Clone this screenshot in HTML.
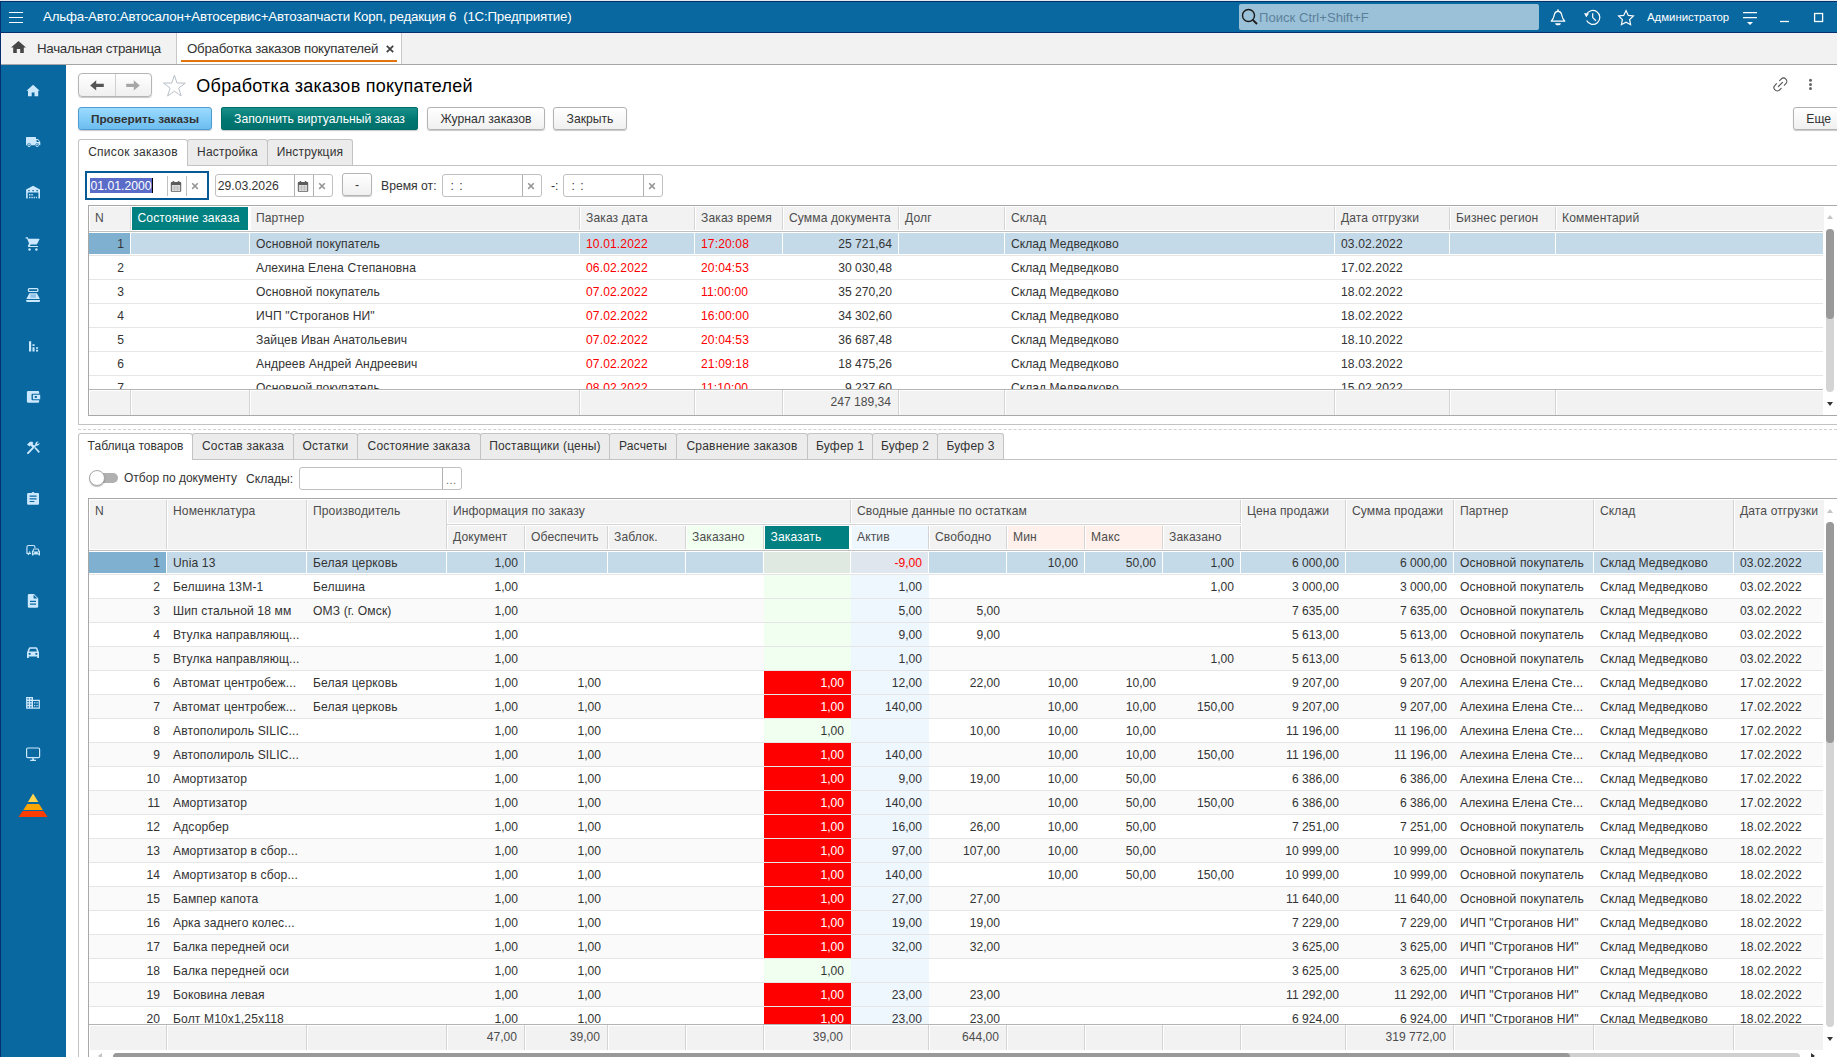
<!DOCTYPE html>
<html lang="ru"><head><meta charset="utf-8"><title>Обработка заказов покупателей</title>
<style>
*{box-sizing:border-box;margin:0;padding:0}
html,body{width:1837px;height:1057px;overflow:hidden;background:#fff}
body{font-family:"Liberation Sans",sans-serif;font-size:12.2px;color:#333;position:relative}
.abs{position:absolute}
#topbar{position:absolute;left:0;top:0;width:1837px;height:33px;background:linear-gradient(#e4e9ee 0,#e4e9ee 1px,#04306e 1px,#04306e 2px,#08689f 2px,#08689f 32px,#04306e 32px)}
#topbar .ttl{position:absolute;left:43px;top:9.4px;font-size:13.3px;letter-spacing:-.2px;color:#fff;white-space:pre;line-height:15px}
#search{position:absolute;left:1239px;top:4px;width:300px;height:26px;background:#9bc1d9;border-radius:2px}
#search .ph{position:absolute;left:20px;top:5.7px;font-size:13.1px;line-height:16px;color:#5b8099}
#admin{position:absolute;left:1647px;top:10px;font-size:11.4px;line-height:14px;color:#fff}
#tabbar{position:absolute;left:0;top:33px;width:1837px;height:32px;background:#f2f2f2;border-bottom:1px solid #a6a6a6}
#tabbar .t1{position:absolute;left:37px;top:7.5px;font-size:13.3px;letter-spacing:-.26px;line-height:15px;color:#333}
#tabbar .sep{position:absolute;left:176px;top:0;width:1px;height:31px;background:#c8c8c8}
#tabbar .act{position:absolute;left:177px;top:0;width:225px;height:31px;background:#fff;border-right:1px solid #c8c8c8}
#tabbar .act .tx{position:absolute;left:10px;top:7.5px;font-size:13.3px;letter-spacing:-.26px;line-height:15px;color:#333;white-space:nowrap}
#tabbar .act .ul{position:absolute;left:4px;top:27px;width:216px;height:2px;background:#e2740c}
#tabbar .act .x{position:absolute;left:208.5px;top:11.7px}
#side{position:absolute;left:0;top:65px;width:66px;height:992px;background:#08689f}

#main{position:absolute;left:67px;top:65px;width:1770px;height:992px;background:#fff}
.btn{position:absolute;height:23px;border:1px solid #b4b4b4;border-radius:3px;background:linear-gradient(#fff,#f0f0f0);box-shadow:0 1px 1px rgba(0,0,0,.22);font-size:12.2px;line-height:23px;text-align:center;color:#333;white-space:nowrap}
.btn.blue{background:linear-gradient(#9bdbff,#6cbdf0);border-color:#4d9bd1;font-weight:bold;color:#333;font-size:11.8px}
.btn.teal{background:linear-gradient(#189089,#007570 60%,#00716c);border-color:#006d68;color:#fff;border-radius:2px}
#title{position:absolute;left:196.3px;top:75px;font-size:18px;letter-spacing:.26px;line-height:22px;color:#000;white-space:nowrap}
.tabs{position:absolute;height:27px}
.tab{position:absolute;top:0;height:26px;border:1px solid #c3c3c3;border-bottom:none;background:#ececec;font-size:12.2px;line-height:24px;text-align:center;color:#333;border-radius:3px 3px 0 0;white-space:nowrap;letter-spacing:.2px;font-size:12px}
.tab.on{background:#fff;height:27px;z-index:2;letter-spacing:.05px}
.hline{position:absolute;height:1px;background:#c3c3c3}
.fld{position:absolute;height:23px;border:1px solid #c0c0c0;border-radius:3px;background:#fff;font-size:13px;line-height:22px;color:#333}
/* tables */
.tbl{position:absolute;border:1px solid #a8a8a8;background:#fff;overflow:hidden;font-size:12.1px}
.tbl .hrow{position:absolute;left:0;width:1734px;background:#fff}
.tbl .hc{position:absolute;top:0;background:#f2f2f2;border-right:1px solid #d4d4d4;color:#4d4d4d;white-space:nowrap;overflow:hidden;letter-spacing:.1px}
.tbl .hc{box-shadow:inset 1px 0 0 #fff}
.tbl .hc.teal{box-shadow:none}
.tbl .fc{box-shadow:inset 1px 1px 0 #fff}
.tbl .hc span{position:absolute;left:6px;top:4px;line-height:14px}
.tbl .hc.teal{background:#008080;color:#fff;border:0 solid #fff;border-left-width:1px;border-right:2px solid #fff;}
.tbl .hc.teal span{left:5.5px}
.tbl .body{position:absolute;left:0;width:1734px;overflow:hidden;border-top:1px solid #c0c0c0}
.tbl .row{position:absolute;left:0;width:1734px;height:24px;border-bottom:1px solid #e6e6e6;background:#fff}
.tbl .row.alt{background:#fafafa}
.tbl .c{position:absolute;top:0;height:23px;line-height:25px;padding:0 6px;white-space:nowrap;overflow:hidden;color:#333;letter-spacing:.12px}
.tbl .c.r{text-align:right;padding-right:7px;letter-spacing:0}
.tbl .c.n{padding-right:7px}
.tbl .c.red{color:#f00}
.tbl .row.sel{background:#fff}
.tbl .row.sel .c{top:1px;height:21px;line-height:23px;background:#c4dae9;border-right:1px solid #fff}
.tbl .row.sel .c.n{background:#7fb0d0}
.tbl .row.sel .c.r{padding-right:6px}
.tbl .c.green{background:#f0fff0}
.tbl .c.blue{background:#eef6fe}
.tbl .row.sel .c.green{background:#dfe9e2}
.tbl .row.sel .c.blue{background:#dfe6ee}
.tbl .c.redbg{background:#f00;color:#fff;height:23px}
.tbl .frow{position:absolute;left:0;width:1734px;background:#f2f2f2;border-top:1px solid #b4b4b4}
.tbl .fc{position:absolute;top:0;height:100%;border-right:1px solid #d4d4d4;padding:0 7px;line-height:24px;color:#4d4d4d;white-space:nowrap}
.tbl .fc.r{text-align:right}
.tbl .hc.hgreen{background:#f0fff0}
.tbl .hc.hblue{background:#eef6fe}
.tbl .hc.hpink{background:#fff0eb}
.tbl .hc.sub span{top:3.5px}
.tbl .hc.grp{border-bottom:none}
.vsb{position:absolute;width:8px;border-radius:4px;background:#d4d4d4}
.vsb .th{position:absolute;left:0;top:0;width:8px;border-radius:4px;background:#999}
.arr{position:absolute;width:0;height:0;border-left:3.5px solid transparent;border-right:3.5px solid transparent}
.arr.up{border-bottom:4px solid #c4c4c4}
.arr.dn{border-top:4px solid #333}

.tbl .hc.last,.tbl .fc.last{border-right:none}
.tbl .c.sk{letter-spacing:.04px}

</style></head><body>
<div id="topbar">
  <div class="ttl">Альфа-Авто:Автосалон+Автосервис+Автозапчасти Корп, редакция 6  (1С:Предприятие)</div>
  <div id="search">
    <svg class="abs" style="left:2px;top:4px" width="18" height="18" viewBox="0 0 18 18"><circle cx="7.5" cy="7.5" r="6" stroke="#1a1a1a" stroke-width="1.4" fill="none"/><path d="M11.8 11.8L16 16" stroke="#1a1a1a" stroke-width="1.8"/></svg>
    <div class="ph">Поиск Ctrl+Shift+F</div>
  </div>
  <div id="admin">Администратор</div>
  
</div>
<svg class="abs" style="left:0;top:0" width="1837" height="33" viewBox="0 0 1837 33" fill="none" stroke="#fff" stroke-width="1.2">
<path d="M1551.2 21.2 H1564.8 C1562.2 19 1562 16.5 1561.6 14.3 C1561.2 12.3 1559.8 11.3 1558 11.3 C1556.2 11.3 1554.8 12.3 1554.4 14.3 C1554 16.5 1553.8 19 1551.2 21.2 Z" stroke-linejoin="round"/>
<path d="M1558 11.2 V10" stroke-width="1.6" stroke-linecap="round"/>
<path d="M1555.2 23.3 H1560.8 A2.8 2 0 0 1 1555.2 23.3 Z" fill="#fff" stroke="none"/>
<!-- history -->
<path d="M1586.6 20.6 A7 7 0 1 0 1586.3 14.9"/>
<path d="M1584 13.3 L1589 13.6 L1586.3 17.2 Z" fill="#fff" stroke="none"/>
<path d="M1592.7 13.2 V17.6 L1596 20.8"/>
<!-- star -->
<path d="M1626 10.6 L1628.3 15.4 L1633.4 16 L1629.6 19.6 L1630.6 24.7 L1626 22.2 L1621.4 24.7 L1622.4 19.6 L1618.6 16 L1623.7 15.4 Z" stroke-linejoin="miter"/>
<!-- filter -->
<path d="M1743 12.6 H1757 M1743 17.6 H1757"/>
<path d="M1747 22 H1753 L1750 25 Z" fill="#fff" stroke="none"/>
<!-- min / max -->
<path d="M1780 21.5 H1789" stroke-width="1.3"/>
<rect x="1814.6" y="13.5" width="8" height="8" stroke-width="1.3"/>
<!-- hamburger -->
<path d="M9 12.5 H23 M9 17.5 H23 M9 22.5 H23" stroke-width="1.15"/>
</svg>
<div id="tabbar">
  <svg class="abs" style="left:11px;top:8px" width="15" height="12.4" viewBox="0 0 15 13" preserveAspectRatio="none"><path d="M7.5 0L0 6.8h2.2V13h3.6V8.4h3.4V13h3.6V6.8H15z" fill="#464646"/></svg>
  <div class="t1">Начальная страница</div>
  <div class="sep"></div>
  <div class="act"><div class="tx">Обработка заказов покупателей</div><div class="ul"></div>
    <svg class="x" width="8" height="8" viewBox="0 0 8 8"><path d="M.8 .8l6.4 6.4M7.2 .8l-6.4 6.4" stroke="#444" stroke-width="1.8"/></svg></div>
</div>
<div id="side"></div>
<svg class="abs" style="left:0;top:65px" width="67" height="992" viewBox="0 65 67 992" fill="#cce8ff">
<!-- home -->
<path d="M33.1 84.8 L39.7 90.7 H38.2 V96.2 H34.5 V92.6 H31.7 V96.2 H28 V90.7 H26.5 Z"/>
<!-- truck -->
<path d="M26 137.6 a.7 .7 0 0 1 .7 -.7 H35.3 a.7 .7 0 0 1 .7 .7 V139 H38 L40.3 142 V145.3 H26 Z M36.6 140 V142 H39.2 L37.7 140 Z"/>
<circle cx="29.1" cy="145.4" r="2.1" fill="#08689f"/><circle cx="37.2" cy="145.4" r="2.1" fill="#08689f"/>
<circle cx="29.1" cy="145.4" r="1.25" fill="none" stroke="#cce8ff" stroke-width="1"/><circle cx="37.2" cy="145.4" r="1.25" fill="none" stroke="#cce8ff" stroke-width="1"/>
<!-- warehouse -->
<path d="M33.1 185.8 L40 189.6 V198.4 H38.4 V192.6 H27.7 V198.4 H26.1 V189.6 Z M28.3 190 v1.3 h1.4 v-1.3z M32.4 190 v1.3 h1.4 v-1.3z M36.4 190 v1.3 h1.4 v-1.3z"/>
<path d="M29 194 h1.5 v1.5 h-1.5z M31.3 194 h1.5 v1.5 h-1.5z M29 196.7 h1.5 v1.5 h-1.5z M31.3 196.7 h1.5 v1.5 h-1.5z M33.6 196.7 h1.5 v1.5 h-1.5z M35.9 196.7 h1.2 v1.5 h-1.2z" opacity=".9"/>
<!-- cart -->
<path d="M25.6 237.3 H27.8 L28.4 238.7 H39 a.5 .5 0 0 1 .45 .75 L37.1 244 a1.2 1.2 0 0 1 -1.05 .6 H30.6 L29.9 245.9 H38 V247.1 H29 a1.1 1.1 0 0 1 -1 -1.65 L29.1 243.6 L27 238.5 H25.6 Z"/>
<circle cx="29.5" cy="249.4" r="1.25"/><circle cx="36.4" cy="249.4" r="1.25"/>
<!-- cash register -->
<path d="M29.3 288 H37 a1.5 1.5 0 0 1 1.5 1.5 V290.6 a1.5 1.5 0 0 1 -1.5 1.5 H29.3 a1.5 1.5 0 0 1 -1.5 -1.5 V289.5 a1.5 1.5 0 0 1 1.5 -1.5 Z M29.6 289.2 a.6 .6 0 0 0 -.6 .6 v.5 a.6 .6 0 0 0 .6 .6 H36.7 a.6 .6 0 0 0 .6 -.6 v-.5 a.6 .6 0 0 0 -.6 -.6 Z" fill-rule="evenodd"/>
<path d="M29.4 293.3 H36.9 L39.9 299 H26.3 Z"/>
<path d="M30.3 294.3 H36 V297.8 H30.3 Z" fill="#8fc1e6"/>
<path d="M26.2 299.9 H40 V301.2 L39.2 302.1 H27 L26.2 301.2 Z"/>
<!-- bars -->
<path d="M29 341.2 h2.2 v10.2 h-2.2z M32.5 344.2 h2.1 v1.9 h-2.1z M32.5 347.2 h2.1 v4.2 h-2.1z M36 347.2 h2.1 v1.5 h-2.1z M36 349.7 h2.1 v1.7 h-2.1z"/>
<!-- wallet -->
<path d="M28.1 391 H38 a1.2 1.2 0 0 1 1.2 1.2 V393.7 H32.5 a1 1 0 0 0 -1 1 V399.2 a1 1 0 0 0 1 1 H39.2 V401.6 a1.2 1.2 0 0 1 -1.2 1.2 H28.1 a1.2 1.2 0 0 1 -1.2 -1.2 V392.2 a1.2 1.2 0 0 1 1.2 -1.2 Z"/>
<path d="M32.9 394.8 H40.2 V399.2 H32.9 Z M34.8 396 v2 h2 v-2 z" fill-rule="evenodd"/>
<!-- tools -->
<path d="M27.6 454 L26.8 453.1 L32.3 447.3 L30.5 445.5 L29.5 446.5 L27 444.6 L30 441.8 H32.3 L33.4 443 L32.5 443.9 L34.2 445.6 L35.3 444.6 a2.6 2.6 0 0 1 3.2 -3 L37 443.2 L37.9 444.2 L39.5 442.7 a2.6 2.6 0 0 1 -3.2 3 L28.5 454 Z"/>
<path d="M34.5 448.2 L35.6 447.1 L39.9 451.8 L38.7 453 Z"/>
<!-- clipboard -->
<path d="M28.1 493 H31.6 a1.5 1.5 0 0 1 2.9 0 H38 a1 1 0 0 1 1 1 V503.8 a1 1 0 0 1 -1 1 H28.1 a1 1 0 0 1 -1 -1 V494 a1 1 0 0 1 1 -1 Z M29.6 495.5 v1.2 h7 v-1.2z M29.6 498.2 v1.2 h7 v-1.2z M29.6 500.9 v1.2 h4.8 v-1.2z" fill-rule="evenodd"/>
<!-- commute -->
<path d="M28.3 545 H33.5 a2 2 0 0 1 2 2 V548 H34.4 V547 a.9 .9 0 0 0 -.9 -.9 H28.4 a.9 .9 0 0 0 -.9 .9 V552.8 H31 V553.9 H29.2 V555 H27.8 V553.9 H26.4 V547 a2 2 0 0 1 2 -2 Z" />
<circle cx="29.6" cy="552" r=".8"/>
<path d="M33.6 548.6 H38.3 L40 551.6 V555.4 H38.6 V554.4 H33.3 V555.4 H31.9 V551.6 Z M34.2 549.6 L33.3 551.4 H38.6 L37.7 549.6 Z M33 552.3 v1 h1.2 v-1z M37.7 552.3 v1 h1.2 v-1z" fill-rule="evenodd"/>
<!-- document -->
<path d="M29 594 H34 L38.2 598.2 V606.6 a1.2 1.2 0 0 1 -1.2 1.2 H29 a1.2 1.2 0 0 1 -1.2 -1.2 V595.2 a1.2 1.2 0 0 1 1.2 -1.2 Z M33.6 594.8 V598.6 H37.4 Z M30 600.8 v1.3 h6 v-1.3z M30 603.4 v1.3 h6 v-1.3z" fill-rule="evenodd"/>
<!-- car -->
<path d="M29.9 647.2 H36.2 a1.2 1.2 0 0 1 1.1 .8 L39 652.4 V658 H37.2 V656.6 H28.8 V658 H27 V652.4 L28.8 648 a1.2 1.2 0 0 1 1.1 -.8 Z M30.1 648.8 L29 651.6 H37 L36 648.8 Z M28.7 653 v1.7 h1.9 v-1.7z M35.4 653 v1.7 h1.9 v-1.7z" fill-rule="evenodd"/>
<!-- building -->
<path d="M26.1 697 H33 V699.7 H39.9 V708.8 H26.1 Z M27.4 698.2 v1.3 h1.4 v-1.3z M30.2 698.2 v1.3 h1.4 v-1.3z M27.4 700.9 v1.3 h1.4 v-1.3z M30.2 700.9 v1.3 h1.4 v-1.3z M27.4 703.5 v1.3 h1.4 v-1.3z M30.2 703.5 v1.3 h1.4 v-1.3z M27.4 706.2 v1.3 h1.4 v-1.3z M30.2 706.2 v1.3 h1.4 v-1.3z M33 701 v6.6 h5.7 v-6.6z" fill-rule="evenodd"/>
<path d="M34 702.3 h1.3 v1.3 h-1.3z M36.4 702.3 h1.3 v1.3 h-1.3z M34 705 h1.3 v1.3 h-1.3z M36.4 705 h1.3 v1.3 h-1.3z" opacity=".95"/>
<!-- monitor -->
<rect x="26.6" y="748" width="13" height="9.7" rx="1.2" fill="none" stroke="#cce8ff" stroke-width="1.2"/>
<path d="M32.2 758.2 H34 V759.8 H36 V760.9 H30.2 V759.8 H32.2 Z"/>
<!-- pyramid -->
<path d="M33.1 793.4 L38.3 802 H27.9 Z" fill="#ffd54f"/>
<path d="M27.2 803.9 H39 L42.9 810 H23.3 Z" fill="#ffa500"/>
<path d="M22.7 811 H43.5 L47.6 817.1 H18.6 Z" fill="#ff3d00"/>
</svg>
<div class="abs" style="left:0;top:1px;width:1px;height:1056px;background:#04306e"></div>
<div id="main"></div>
<!-- form header -->
<div class="btn" style="left:78px;top:73px;width:74px;height:24px;border-radius:4px"></div>
<div class="abs" style="left:115px;top:74px;width:1px;height:22px;background:#d0d0d0"></div>
<div id="title">Обработка заказов покупателей</div>

<div class="btn blue" style="left:78px;top:107px;width:134px">Проверить заказы</div>
<div class="btn teal" style="left:221px;top:107px;width:197px">Заполнить виртуальный заказ</div>
<div class="btn" style="left:427px;top:107px;width:118px">Журнал заказов</div>
<div class="btn" style="left:553px;top:107px;width:74px">Закрыть</div>
<div class="btn" style="left:1793px;top:107px;width:60px;text-align:left;padding-left:12.3px;line-height:22px">Еще<span style="font-size:8px;padding-left:6px">▾</span></div>
<!-- upper tabs -->
<div class="tabs" style="left:78px;top:139px;width:1759px">
  <div class="tab on" style="left:0;width:110px;letter-spacing:.27px">Список заказов</div>
  <div class="tab" style="left:109px;width:81px">Настройка</div>
  <div class="tab" style="left:189px;width:86px">Инструкция</div>
</div>
<div class="hline" style="left:78px;top:165px;width:1759px"></div>
<div class="abs" style="left:78px;top:165px;width:1px;height:260px;background:#c3c3c3"></div>
<div class="hline" style="left:78px;top:424px;width:1759px"></div>
<div class="abs" style="left:78px;top:429px;width:1759px;height:0;border-top:1px dashed #d0d0d0"></div>
<!-- date filters -->
<div class="abs" style="left:85px;top:171px;width:124px;height:29px;border:2px solid #055a96;background:#fff"></div>
<div class="abs" style="left:90px;top:178px;width:62px;height:15px;background:#5a6cc8;color:#fff;font-size:12.2px;line-height:17px;padding-left:0.5px;white-space:nowrap">01.01.2000</div><div class="abs" style="left:152px;top:178px;width:1px;height:15px;background:#000"></div>
<div class="abs" style="left:167px;top:176px;width:1px;height:20px;background:#c0c0c0"></div>
<div class="abs" style="left:186px;top:176px;width:1px;height:20px;background:#c0c0c0"></div>
<div class="fld" style="left:215px;top:174px;width:118px;height:23px;padding-left:1.7px;font-size:12.2px;line-height:22px">29.03.2026</div>
<div class="abs" style="left:294px;top:175px;width:1px;height:21px;background:#b0b0b0"></div>
<div class="abs" style="left:313px;top:175px;width:1px;height:21px;background:#b0b0b0"></div>

<div class="btn" style="left:342px;top:173px;width:30px">-</div>
<div class="abs" style="left:381px;top:179px;line-height:14px">Время от:</div>
<div class="fld" style="left:442px;top:174px;width:100px;padding-left:7.5px;word-spacing:2px;font-size:12.2px">: :</div>
<div class="abs" style="left:522px;top:175px;width:1px;height:21px;background:#b0b0b0"></div>
<div class="abs" style="left:551px;top:179px;line-height:14px">-:</div>
<div class="fld" style="left:563px;top:174px;width:100px;padding-left:7.5px;word-spacing:2px;font-size:12.2px">: :</div>
<div class="abs" style="left:643px;top:175px;width:1px;height:21px;background:#b0b0b0"></div>
<div class="tbl" id="t1" style="left:88px;top:205px;width:1755px;height:211px">
<div class="hrow" style="top:1px;height:23px">
<div class="hc" style="left:0px;width:42px;height:23px"><span>N</span></div>
<div class="hc teal" style="left:42px;width:119px;height:23px"><span>Состояние заказа</span></div>
<div class="hc" style="left:161px;width:330px;height:23px"><span>Партнер</span></div>
<div class="hc" style="left:491px;width:115px;height:23px"><span>Заказ дата</span></div>
<div class="hc" style="left:606px;width:88px;height:23px"><span>Заказ время</span></div>
<div class="hc" style="left:694px;width:116px;height:23px"><span>Сумма документа</span></div>
<div class="hc" style="left:810px;width:106px;height:23px"><span>Долг</span></div>
<div class="hc" style="left:916px;width:330px;height:23px"><span>Склад</span></div>
<div class="hc" style="left:1246px;width:115px;height:23px"><span>Дата отгрузки</span></div>
<div class="hc" style="left:1361px;width:106px;height:23px"><span>Бизнес регион</span></div>
<div class="hc last" style="left:1467px;width:268px;height:23px"><span>Комментарий</span></div>
</div>
<div class="body" style="top:25px;height:158px">
<div class="row sel" style="top:0px">
<div class="c r n" style="left:0px;width:42px">1</div>
<div class="c" style="left:42px;width:119px"></div>
<div class="c" style="left:161px;width:330px">Основной покупатель</div>
<div class="c red" style="left:491px;width:115px">10.01.2022</div>
<div class="c red" style="left:606px;width:88px">17:20:08</div>
<div class="c r" style="left:694px;width:116px">25 721,64</div>
<div class="c" style="left:810px;width:106px"></div>
<div class="c sk" style="left:916px;width:330px">Склад Медведково</div>
<div class="c" style="left:1246px;width:115px">03.02.2022</div>
<div class="c" style="left:1361px;width:106px"></div>
<div class="c" style="left:1467px;width:268px"></div>
</div>
<div class="row" style="top:24px">
<div class="c r n" style="left:0px;width:42px">2</div>
<div class="c" style="left:42px;width:119px"></div>
<div class="c" style="left:161px;width:330px">Алехина Елена Степановна</div>
<div class="c red" style="left:491px;width:115px">06.02.2022</div>
<div class="c red" style="left:606px;width:88px">20:04:53</div>
<div class="c r" style="left:694px;width:116px">30 030,48</div>
<div class="c" style="left:810px;width:106px"></div>
<div class="c sk" style="left:916px;width:330px">Склад Медведково</div>
<div class="c" style="left:1246px;width:115px">17.02.2022</div>
<div class="c" style="left:1361px;width:106px"></div>
<div class="c" style="left:1467px;width:268px"></div>
</div>
<div class="row" style="top:48px">
<div class="c r n" style="left:0px;width:42px">3</div>
<div class="c" style="left:42px;width:119px"></div>
<div class="c" style="left:161px;width:330px">Основной покупатель</div>
<div class="c red" style="left:491px;width:115px">07.02.2022</div>
<div class="c red" style="left:606px;width:88px">11:00:00</div>
<div class="c r" style="left:694px;width:116px">35 270,20</div>
<div class="c" style="left:810px;width:106px"></div>
<div class="c sk" style="left:916px;width:330px">Склад Медведково</div>
<div class="c" style="left:1246px;width:115px">18.02.2022</div>
<div class="c" style="left:1361px;width:106px"></div>
<div class="c" style="left:1467px;width:268px"></div>
</div>
<div class="row" style="top:72px">
<div class="c r n" style="left:0px;width:42px">4</div>
<div class="c" style="left:42px;width:119px"></div>
<div class="c" style="left:161px;width:330px">ИЧП "Строганов НИ"</div>
<div class="c red" style="left:491px;width:115px">07.02.2022</div>
<div class="c red" style="left:606px;width:88px">16:00:00</div>
<div class="c r" style="left:694px;width:116px">34 302,60</div>
<div class="c" style="left:810px;width:106px"></div>
<div class="c sk" style="left:916px;width:330px">Склад Медведково</div>
<div class="c" style="left:1246px;width:115px">18.02.2022</div>
<div class="c" style="left:1361px;width:106px"></div>
<div class="c" style="left:1467px;width:268px"></div>
</div>
<div class="row" style="top:96px">
<div class="c r n" style="left:0px;width:42px">5</div>
<div class="c" style="left:42px;width:119px"></div>
<div class="c" style="left:161px;width:330px">Зайцев Иван Анатольевич</div>
<div class="c red" style="left:491px;width:115px">07.02.2022</div>
<div class="c red" style="left:606px;width:88px">20:04:53</div>
<div class="c r" style="left:694px;width:116px">36 687,48</div>
<div class="c" style="left:810px;width:106px"></div>
<div class="c sk" style="left:916px;width:330px">Склад Медведково</div>
<div class="c" style="left:1246px;width:115px">18.10.2022</div>
<div class="c" style="left:1361px;width:106px"></div>
<div class="c" style="left:1467px;width:268px"></div>
</div>
<div class="row" style="top:120px">
<div class="c r n" style="left:0px;width:42px">6</div>
<div class="c" style="left:42px;width:119px"></div>
<div class="c" style="left:161px;width:330px">Андреев Андрей Андреевич</div>
<div class="c red" style="left:491px;width:115px">07.02.2022</div>
<div class="c red" style="left:606px;width:88px">21:09:18</div>
<div class="c r" style="left:694px;width:116px">18 475,26</div>
<div class="c" style="left:810px;width:106px"></div>
<div class="c sk" style="left:916px;width:330px">Склад Медведково</div>
<div class="c" style="left:1246px;width:115px">18.03.2022</div>
<div class="c" style="left:1361px;width:106px"></div>
<div class="c" style="left:1467px;width:268px"></div>
</div>
<div class="row" style="top:144px">
<div class="c r n" style="left:0px;width:42px">7</div>
<div class="c" style="left:42px;width:119px"></div>
<div class="c" style="left:161px;width:330px">Основной покупатель</div>
<div class="c red" style="left:491px;width:115px">08.02.2022</div>
<div class="c red" style="left:606px;width:88px">11:10:00</div>
<div class="c r" style="left:694px;width:116px">9 237,60</div>
<div class="c" style="left:810px;width:106px"></div>
<div class="c sk" style="left:916px;width:330px">Склад Медведково</div>
<div class="c" style="left:1246px;width:115px">15.02.2022</div>
<div class="c" style="left:1361px;width:106px"></div>
<div class="c" style="left:1467px;width:268px"></div>
</div>
</div>
<div class="frow" style="top:183px;height:26px">
<div class="fc r" style="left:0px;width:42px"></div>
<div class="fc r" style="left:42px;width:119px"></div>
<div class="fc r" style="left:161px;width:330px"></div>
<div class="fc r" style="left:491px;width:115px"></div>
<div class="fc r" style="left:606px;width:88px"></div>
<div class="fc r" style="left:694px;width:116px">247 189,34</div>
<div class="fc r" style="left:810px;width:106px"></div>
<div class="fc r" style="left:916px;width:330px"></div>
<div class="fc r" style="left:1246px;width:115px"></div>
<div class="fc r" style="left:1361px;width:106px"></div>
<div class="fc r last" style="left:1467px;width:268px"></div>
</div>
</div>
<div class="vsb" style="left:1826px;top:229px;height:163px"><div class="th" style="height:90px"></div></div>
<div class="arr up" style="left:1826.5px;top:215px"></div><div class="arr dn" style="left:1826.5px;top:402px"></div>
<!-- lower tabs -->
<div class="tabs" style="left:78px;top:433px;width:1759px">
  <div class="tab on" style="left:0;width:115px">Таблица товаров</div>
  <div class="tab" style="left:114px;width:102px">Состав заказа</div>
  <div class="tab" style="left:215px;width:65px">Остатки</div>
  <div class="tab" style="left:279px;width:124px">Состояние заказа</div>
  <div class="tab" style="left:402px;width:130px">Поставщики (цены)</div>
  <div class="tab" style="left:531px;width:68px">Расчеты</div>
  <div class="tab" style="left:598px;width:132px">Сравнение заказов</div>
  <div class="tab" style="left:729px;width:66px">Буфер 1</div>
  <div class="tab" style="left:794px;width:66px">Буфер 2</div>
  <div class="tab" style="left:859px;width:67px">Буфер 3</div>
</div>
<div class="hline" style="left:78px;top:459px;width:1759px"></div>
<div class="abs" style="left:78px;top:459px;width:1px;height:598px;background:#c3c3c3"></div>
<!-- toggle row -->
<div class="abs" style="left:96px;top:473px;width:22px;height:10px;border-radius:5px;background:#b0b0b0"></div>
<div class="abs" style="left:89px;top:470px;width:16px;height:16px;border-radius:8px;background:#fff;border:1px solid #a8a8a8;box-shadow:0 1px 1px rgba(0,0,0,.25)"></div>
<div class="abs" style="left:124px;top:470.5px;line-height:14px;font-size:12px;white-space:nowrap">Отбор по документу</div>
<div class="abs" style="left:246px;top:471.5px;line-height:14px;font-size:12.1px">Склады:</div>
<div class="fld" style="left:299px;top:467px;width:163px;height:23px"></div>
<div class="abs" style="left:442px;top:468px;width:1px;height:21px;background:#b0b0b0"></div>
<div class="abs" style="left:446px;top:473px;font-size:11px;line-height:14px;color:#666;letter-spacing:.4px">...</div>
<div class="tbl" id="t2" style="left:88px;top:498px;width:1755px;height:565px">
<div class="hrow" style="top:1px;height:50px">
<div class="hc tall" style="left:0px;width:78px;height:49px"><span>N</span></div>
<div class="hc tall" style="left:78px;width:140px;height:49px"><span>Номенклатура</span></div>
<div class="hc tall" style="left:218px;width:140px;height:49px"><span>Производитель</span></div>
<div class="hc sub" style="left:358px;width:78px;top:26px;height:23px"><span>Документ</span></div>
<div class="hc sub" style="left:436px;width:83px;top:26px;height:23px"><span>Обеспечить</span></div>
<div class="hc sub" style="left:519px;width:78px;top:26px;height:23px"><span>Заблок.</span></div>
<div class="hc sub hgreen" style="left:597px;width:78px;top:26px;height:23px"><span>Заказано</span></div>
<div class="hc sub teal" style="left:675px;width:87px;top:26px;height:23px"><span>Заказать</span></div>
<div class="hc sub hblue" style="left:762px;width:78px;top:26px;height:23px"><span>Актив</span></div>
<div class="hc sub" style="left:840px;width:78px;top:26px;height:23px"><span>Свободно</span></div>
<div class="hc sub hpink" style="left:918px;width:78px;top:26px;height:23px"><span>Мин</span></div>
<div class="hc sub hpink" style="left:996px;width:78px;top:26px;height:23px"><span>Макс</span></div>
<div class="hc sub" style="left:1074px;width:78px;top:26px;height:23px"><span>Заказано</span></div>
<div class="hc tall" style="left:1152px;width:105px;height:49px"><span>Цена продажи</span></div>
<div class="hc tall" style="left:1257px;width:108px;height:49px"><span>Сумма продажи</span></div>
<div class="hc tall" style="left:1365px;width:140px;height:49px"><span>Партнер</span></div>
<div class="hc tall" style="left:1505px;width:140px;height:49px"><span>Склад</span></div>
<div class="hc tall last" style="left:1645px;width:90px;height:49px"><span>Дата отгрузки</span></div>
<div class="hc grp" style="left:358px;width:404px;height:23px"><span>Информация по заказу</span></div>
<div class="hc grp" style="left:762px;width:390px;height:23px"><span>Сводные данные по остаткам</span></div>
</div>
<div class="abs" style="left:358px;top:25px;width:794px;height:1px;background:#d4d4d4"></div>
<div class="body" style="top:51px;height:474px">
<div class="row sel" style="top:0px">
<div class="c r n" style="left:0px;width:78px">1</div>
<div class="c" style="left:78px;width:140px">Unia 13</div>
<div class="c" style="left:218px;width:140px">Белая церковь</div>
<div class="c r" style="left:358px;width:78px">1,00</div>
<div class="c r" style="left:436px;width:83px"></div>
<div class="c r" style="left:519px;width:78px"></div>
<div class="c r" style="left:597px;width:78px"></div>
<div class="c r green" style="left:675px;width:87px"></div>
<div class="c r blue red" style="left:762px;width:78px">-9,00</div>
<div class="c r" style="left:840px;width:78px"></div>
<div class="c r" style="left:918px;width:78px">10,00</div>
<div class="c r" style="left:996px;width:78px">50,00</div>
<div class="c r" style="left:1074px;width:78px">1,00</div>
<div class="c r" style="left:1152px;width:105px">6 000,00</div>
<div class="c r" style="left:1257px;width:108px">6 000,00</div>
<div class="c" style="left:1365px;width:140px">Основной покупатель</div>
<div class="c sk" style="left:1505px;width:140px">Склад Медведково</div>
<div class="c" style="left:1645px;width:90px">03.02.2022</div>
</div>
<div class="row" style="top:24px">
<div class="c r n" style="left:0px;width:78px">2</div>
<div class="c" style="left:78px;width:140px">Белшина 13М-1</div>
<div class="c" style="left:218px;width:140px">Белшина</div>
<div class="c r" style="left:358px;width:78px">1,00</div>
<div class="c r" style="left:436px;width:83px"></div>
<div class="c r" style="left:519px;width:78px"></div>
<div class="c r" style="left:597px;width:78px"></div>
<div class="c r green" style="left:675px;width:87px"></div>
<div class="c r blue" style="left:762px;width:78px">1,00</div>
<div class="c r" style="left:840px;width:78px"></div>
<div class="c r" style="left:918px;width:78px"></div>
<div class="c r" style="left:996px;width:78px"></div>
<div class="c r" style="left:1074px;width:78px">1,00</div>
<div class="c r" style="left:1152px;width:105px">3 000,00</div>
<div class="c r" style="left:1257px;width:108px">3 000,00</div>
<div class="c" style="left:1365px;width:140px">Основной покупатель</div>
<div class="c sk" style="left:1505px;width:140px">Склад Медведково</div>
<div class="c" style="left:1645px;width:90px">03.02.2022</div>
</div>
<div class="row alt" style="top:48px">
<div class="c r n" style="left:0px;width:78px">3</div>
<div class="c" style="left:78px;width:140px">Шип стальной 18 мм</div>
<div class="c" style="left:218px;width:140px">ОМЗ (г. Омск)</div>
<div class="c r" style="left:358px;width:78px">1,00</div>
<div class="c r" style="left:436px;width:83px"></div>
<div class="c r" style="left:519px;width:78px"></div>
<div class="c r" style="left:597px;width:78px"></div>
<div class="c r green" style="left:675px;width:87px"></div>
<div class="c r blue" style="left:762px;width:78px">5,00</div>
<div class="c r" style="left:840px;width:78px">5,00</div>
<div class="c r" style="left:918px;width:78px"></div>
<div class="c r" style="left:996px;width:78px"></div>
<div class="c r" style="left:1074px;width:78px"></div>
<div class="c r" style="left:1152px;width:105px">7 635,00</div>
<div class="c r" style="left:1257px;width:108px">7 635,00</div>
<div class="c" style="left:1365px;width:140px">Основной покупатель</div>
<div class="c sk" style="left:1505px;width:140px">Склад Медведково</div>
<div class="c" style="left:1645px;width:90px">03.02.2022</div>
</div>
<div class="row" style="top:72px">
<div class="c r n" style="left:0px;width:78px">4</div>
<div class="c" style="left:78px;width:140px">Втулка направляющ...</div>
<div class="c" style="left:218px;width:140px"></div>
<div class="c r" style="left:358px;width:78px">1,00</div>
<div class="c r" style="left:436px;width:83px"></div>
<div class="c r" style="left:519px;width:78px"></div>
<div class="c r" style="left:597px;width:78px"></div>
<div class="c r green" style="left:675px;width:87px"></div>
<div class="c r blue" style="left:762px;width:78px">9,00</div>
<div class="c r" style="left:840px;width:78px">9,00</div>
<div class="c r" style="left:918px;width:78px"></div>
<div class="c r" style="left:996px;width:78px"></div>
<div class="c r" style="left:1074px;width:78px"></div>
<div class="c r" style="left:1152px;width:105px">5 613,00</div>
<div class="c r" style="left:1257px;width:108px">5 613,00</div>
<div class="c" style="left:1365px;width:140px">Основной покупатель</div>
<div class="c sk" style="left:1505px;width:140px">Склад Медведково</div>
<div class="c" style="left:1645px;width:90px">03.02.2022</div>
</div>
<div class="row alt" style="top:96px">
<div class="c r n" style="left:0px;width:78px">5</div>
<div class="c" style="left:78px;width:140px">Втулка направляющ...</div>
<div class="c" style="left:218px;width:140px"></div>
<div class="c r" style="left:358px;width:78px">1,00</div>
<div class="c r" style="left:436px;width:83px"></div>
<div class="c r" style="left:519px;width:78px"></div>
<div class="c r" style="left:597px;width:78px"></div>
<div class="c r green" style="left:675px;width:87px"></div>
<div class="c r blue" style="left:762px;width:78px">1,00</div>
<div class="c r" style="left:840px;width:78px"></div>
<div class="c r" style="left:918px;width:78px"></div>
<div class="c r" style="left:996px;width:78px"></div>
<div class="c r" style="left:1074px;width:78px">1,00</div>
<div class="c r" style="left:1152px;width:105px">5 613,00</div>
<div class="c r" style="left:1257px;width:108px">5 613,00</div>
<div class="c" style="left:1365px;width:140px">Основной покупатель</div>
<div class="c sk" style="left:1505px;width:140px">Склад Медведково</div>
<div class="c" style="left:1645px;width:90px">03.02.2022</div>
</div>
<div class="row" style="top:120px">
<div class="c r n" style="left:0px;width:78px">6</div>
<div class="c" style="left:78px;width:140px">Автомат центробеж...</div>
<div class="c" style="left:218px;width:140px">Белая церковь</div>
<div class="c r" style="left:358px;width:78px">1,00</div>
<div class="c r" style="left:436px;width:83px">1,00</div>
<div class="c r" style="left:519px;width:78px"></div>
<div class="c r" style="left:597px;width:78px"></div>
<div class="c r redbg" style="left:675px;width:87px">1,00</div>
<div class="c r blue" style="left:762px;width:78px">12,00</div>
<div class="c r" style="left:840px;width:78px">22,00</div>
<div class="c r" style="left:918px;width:78px">10,00</div>
<div class="c r" style="left:996px;width:78px">10,00</div>
<div class="c r" style="left:1074px;width:78px"></div>
<div class="c r" style="left:1152px;width:105px">9 207,00</div>
<div class="c r" style="left:1257px;width:108px">9 207,00</div>
<div class="c" style="left:1365px;width:140px">Алехина Елена Сте...</div>
<div class="c sk" style="left:1505px;width:140px">Склад Медведково</div>
<div class="c" style="left:1645px;width:90px">17.02.2022</div>
</div>
<div class="row alt" style="top:144px">
<div class="c r n" style="left:0px;width:78px">7</div>
<div class="c" style="left:78px;width:140px">Автомат центробеж...</div>
<div class="c" style="left:218px;width:140px">Белая церковь</div>
<div class="c r" style="left:358px;width:78px">1,00</div>
<div class="c r" style="left:436px;width:83px">1,00</div>
<div class="c r" style="left:519px;width:78px"></div>
<div class="c r" style="left:597px;width:78px"></div>
<div class="c r redbg" style="left:675px;width:87px">1,00</div>
<div class="c r blue" style="left:762px;width:78px">140,00</div>
<div class="c r" style="left:840px;width:78px"></div>
<div class="c r" style="left:918px;width:78px">10,00</div>
<div class="c r" style="left:996px;width:78px">10,00</div>
<div class="c r" style="left:1074px;width:78px">150,00</div>
<div class="c r" style="left:1152px;width:105px">9 207,00</div>
<div class="c r" style="left:1257px;width:108px">9 207,00</div>
<div class="c" style="left:1365px;width:140px">Алехина Елена Сте...</div>
<div class="c sk" style="left:1505px;width:140px">Склад Медведково</div>
<div class="c" style="left:1645px;width:90px">17.02.2022</div>
</div>
<div class="row" style="top:168px">
<div class="c r n" style="left:0px;width:78px">8</div>
<div class="c" style="left:78px;width:140px">Автополироль SILIC...</div>
<div class="c" style="left:218px;width:140px"></div>
<div class="c r" style="left:358px;width:78px">1,00</div>
<div class="c r" style="left:436px;width:83px">1,00</div>
<div class="c r" style="left:519px;width:78px"></div>
<div class="c r" style="left:597px;width:78px"></div>
<div class="c r green" style="left:675px;width:87px">1,00</div>
<div class="c r blue" style="left:762px;width:78px"></div>
<div class="c r" style="left:840px;width:78px">10,00</div>
<div class="c r" style="left:918px;width:78px">10,00</div>
<div class="c r" style="left:996px;width:78px">10,00</div>
<div class="c r" style="left:1074px;width:78px"></div>
<div class="c r" style="left:1152px;width:105px">11 196,00</div>
<div class="c r" style="left:1257px;width:108px">11 196,00</div>
<div class="c" style="left:1365px;width:140px">Алехина Елена Сте...</div>
<div class="c sk" style="left:1505px;width:140px">Склад Медведково</div>
<div class="c" style="left:1645px;width:90px">17.02.2022</div>
</div>
<div class="row alt" style="top:192px">
<div class="c r n" style="left:0px;width:78px">9</div>
<div class="c" style="left:78px;width:140px">Автополироль SILIC...</div>
<div class="c" style="left:218px;width:140px"></div>
<div class="c r" style="left:358px;width:78px">1,00</div>
<div class="c r" style="left:436px;width:83px">1,00</div>
<div class="c r" style="left:519px;width:78px"></div>
<div class="c r" style="left:597px;width:78px"></div>
<div class="c r redbg" style="left:675px;width:87px">1,00</div>
<div class="c r blue" style="left:762px;width:78px">140,00</div>
<div class="c r" style="left:840px;width:78px"></div>
<div class="c r" style="left:918px;width:78px">10,00</div>
<div class="c r" style="left:996px;width:78px">10,00</div>
<div class="c r" style="left:1074px;width:78px">150,00</div>
<div class="c r" style="left:1152px;width:105px">11 196,00</div>
<div class="c r" style="left:1257px;width:108px">11 196,00</div>
<div class="c" style="left:1365px;width:140px">Алехина Елена Сте...</div>
<div class="c sk" style="left:1505px;width:140px">Склад Медведково</div>
<div class="c" style="left:1645px;width:90px">17.02.2022</div>
</div>
<div class="row" style="top:216px">
<div class="c r n" style="left:0px;width:78px">10</div>
<div class="c" style="left:78px;width:140px">Амортизатор</div>
<div class="c" style="left:218px;width:140px"></div>
<div class="c r" style="left:358px;width:78px">1,00</div>
<div class="c r" style="left:436px;width:83px">1,00</div>
<div class="c r" style="left:519px;width:78px"></div>
<div class="c r" style="left:597px;width:78px"></div>
<div class="c r redbg" style="left:675px;width:87px">1,00</div>
<div class="c r blue" style="left:762px;width:78px">9,00</div>
<div class="c r" style="left:840px;width:78px">19,00</div>
<div class="c r" style="left:918px;width:78px">10,00</div>
<div class="c r" style="left:996px;width:78px">50,00</div>
<div class="c r" style="left:1074px;width:78px"></div>
<div class="c r" style="left:1152px;width:105px">6 386,00</div>
<div class="c r" style="left:1257px;width:108px">6 386,00</div>
<div class="c" style="left:1365px;width:140px">Алехина Елена Сте...</div>
<div class="c sk" style="left:1505px;width:140px">Склад Медведково</div>
<div class="c" style="left:1645px;width:90px">17.02.2022</div>
</div>
<div class="row alt" style="top:240px">
<div class="c r n" style="left:0px;width:78px">11</div>
<div class="c" style="left:78px;width:140px">Амортизатор</div>
<div class="c" style="left:218px;width:140px"></div>
<div class="c r" style="left:358px;width:78px">1,00</div>
<div class="c r" style="left:436px;width:83px">1,00</div>
<div class="c r" style="left:519px;width:78px"></div>
<div class="c r" style="left:597px;width:78px"></div>
<div class="c r redbg" style="left:675px;width:87px">1,00</div>
<div class="c r blue" style="left:762px;width:78px">140,00</div>
<div class="c r" style="left:840px;width:78px"></div>
<div class="c r" style="left:918px;width:78px">10,00</div>
<div class="c r" style="left:996px;width:78px">50,00</div>
<div class="c r" style="left:1074px;width:78px">150,00</div>
<div class="c r" style="left:1152px;width:105px">6 386,00</div>
<div class="c r" style="left:1257px;width:108px">6 386,00</div>
<div class="c" style="left:1365px;width:140px">Алехина Елена Сте...</div>
<div class="c sk" style="left:1505px;width:140px">Склад Медведково</div>
<div class="c" style="left:1645px;width:90px">17.02.2022</div>
</div>
<div class="row" style="top:264px">
<div class="c r n" style="left:0px;width:78px">12</div>
<div class="c" style="left:78px;width:140px">Адсорбер</div>
<div class="c" style="left:218px;width:140px"></div>
<div class="c r" style="left:358px;width:78px">1,00</div>
<div class="c r" style="left:436px;width:83px">1,00</div>
<div class="c r" style="left:519px;width:78px"></div>
<div class="c r" style="left:597px;width:78px"></div>
<div class="c r redbg" style="left:675px;width:87px">1,00</div>
<div class="c r blue" style="left:762px;width:78px">16,00</div>
<div class="c r" style="left:840px;width:78px">26,00</div>
<div class="c r" style="left:918px;width:78px">10,00</div>
<div class="c r" style="left:996px;width:78px">50,00</div>
<div class="c r" style="left:1074px;width:78px"></div>
<div class="c r" style="left:1152px;width:105px">7 251,00</div>
<div class="c r" style="left:1257px;width:108px">7 251,00</div>
<div class="c" style="left:1365px;width:140px">Основной покупатель</div>
<div class="c sk" style="left:1505px;width:140px">Склад Медведково</div>
<div class="c" style="left:1645px;width:90px">18.02.2022</div>
</div>
<div class="row alt" style="top:288px">
<div class="c r n" style="left:0px;width:78px">13</div>
<div class="c" style="left:78px;width:140px">Амортизатор в сбор...</div>
<div class="c" style="left:218px;width:140px"></div>
<div class="c r" style="left:358px;width:78px">1,00</div>
<div class="c r" style="left:436px;width:83px">1,00</div>
<div class="c r" style="left:519px;width:78px"></div>
<div class="c r" style="left:597px;width:78px"></div>
<div class="c r redbg" style="left:675px;width:87px">1,00</div>
<div class="c r blue" style="left:762px;width:78px">97,00</div>
<div class="c r" style="left:840px;width:78px">107,00</div>
<div class="c r" style="left:918px;width:78px">10,00</div>
<div class="c r" style="left:996px;width:78px">50,00</div>
<div class="c r" style="left:1074px;width:78px"></div>
<div class="c r" style="left:1152px;width:105px">10 999,00</div>
<div class="c r" style="left:1257px;width:108px">10 999,00</div>
<div class="c" style="left:1365px;width:140px">Основной покупатель</div>
<div class="c sk" style="left:1505px;width:140px">Склад Медведково</div>
<div class="c" style="left:1645px;width:90px">18.02.2022</div>
</div>
<div class="row" style="top:312px">
<div class="c r n" style="left:0px;width:78px">14</div>
<div class="c" style="left:78px;width:140px">Амортизатор в сбор...</div>
<div class="c" style="left:218px;width:140px"></div>
<div class="c r" style="left:358px;width:78px">1,00</div>
<div class="c r" style="left:436px;width:83px">1,00</div>
<div class="c r" style="left:519px;width:78px"></div>
<div class="c r" style="left:597px;width:78px"></div>
<div class="c r redbg" style="left:675px;width:87px">1,00</div>
<div class="c r blue" style="left:762px;width:78px">140,00</div>
<div class="c r" style="left:840px;width:78px"></div>
<div class="c r" style="left:918px;width:78px">10,00</div>
<div class="c r" style="left:996px;width:78px">50,00</div>
<div class="c r" style="left:1074px;width:78px">150,00</div>
<div class="c r" style="left:1152px;width:105px">10 999,00</div>
<div class="c r" style="left:1257px;width:108px">10 999,00</div>
<div class="c" style="left:1365px;width:140px">Основной покупатель</div>
<div class="c sk" style="left:1505px;width:140px">Склад Медведково</div>
<div class="c" style="left:1645px;width:90px">18.02.2022</div>
</div>
<div class="row alt" style="top:336px">
<div class="c r n" style="left:0px;width:78px">15</div>
<div class="c" style="left:78px;width:140px">Бампер капота</div>
<div class="c" style="left:218px;width:140px"></div>
<div class="c r" style="left:358px;width:78px">1,00</div>
<div class="c r" style="left:436px;width:83px">1,00</div>
<div class="c r" style="left:519px;width:78px"></div>
<div class="c r" style="left:597px;width:78px"></div>
<div class="c r redbg" style="left:675px;width:87px">1,00</div>
<div class="c r blue" style="left:762px;width:78px">27,00</div>
<div class="c r" style="left:840px;width:78px">27,00</div>
<div class="c r" style="left:918px;width:78px"></div>
<div class="c r" style="left:996px;width:78px"></div>
<div class="c r" style="left:1074px;width:78px"></div>
<div class="c r" style="left:1152px;width:105px">11 640,00</div>
<div class="c r" style="left:1257px;width:108px">11 640,00</div>
<div class="c" style="left:1365px;width:140px">Основной покупатель</div>
<div class="c sk" style="left:1505px;width:140px">Склад Медведково</div>
<div class="c" style="left:1645px;width:90px">18.02.2022</div>
</div>
<div class="row" style="top:360px">
<div class="c r n" style="left:0px;width:78px">16</div>
<div class="c" style="left:78px;width:140px">Арка заднего колес...</div>
<div class="c" style="left:218px;width:140px"></div>
<div class="c r" style="left:358px;width:78px">1,00</div>
<div class="c r" style="left:436px;width:83px">1,00</div>
<div class="c r" style="left:519px;width:78px"></div>
<div class="c r" style="left:597px;width:78px"></div>
<div class="c r redbg" style="left:675px;width:87px">1,00</div>
<div class="c r blue" style="left:762px;width:78px">19,00</div>
<div class="c r" style="left:840px;width:78px">19,00</div>
<div class="c r" style="left:918px;width:78px"></div>
<div class="c r" style="left:996px;width:78px"></div>
<div class="c r" style="left:1074px;width:78px"></div>
<div class="c r" style="left:1152px;width:105px">7 229,00</div>
<div class="c r" style="left:1257px;width:108px">7 229,00</div>
<div class="c" style="left:1365px;width:140px">ИЧП "Строганов НИ"</div>
<div class="c sk" style="left:1505px;width:140px">Склад Медведково</div>
<div class="c" style="left:1645px;width:90px">18.02.2022</div>
</div>
<div class="row alt" style="top:384px">
<div class="c r n" style="left:0px;width:78px">17</div>
<div class="c" style="left:78px;width:140px">Балка передней оси</div>
<div class="c" style="left:218px;width:140px"></div>
<div class="c r" style="left:358px;width:78px">1,00</div>
<div class="c r" style="left:436px;width:83px">1,00</div>
<div class="c r" style="left:519px;width:78px"></div>
<div class="c r" style="left:597px;width:78px"></div>
<div class="c r redbg" style="left:675px;width:87px">1,00</div>
<div class="c r blue" style="left:762px;width:78px">32,00</div>
<div class="c r" style="left:840px;width:78px">32,00</div>
<div class="c r" style="left:918px;width:78px"></div>
<div class="c r" style="left:996px;width:78px"></div>
<div class="c r" style="left:1074px;width:78px"></div>
<div class="c r" style="left:1152px;width:105px">3 625,00</div>
<div class="c r" style="left:1257px;width:108px">3 625,00</div>
<div class="c" style="left:1365px;width:140px">ИЧП "Строганов НИ"</div>
<div class="c sk" style="left:1505px;width:140px">Склад Медведково</div>
<div class="c" style="left:1645px;width:90px">18.02.2022</div>
</div>
<div class="row" style="top:408px">
<div class="c r n" style="left:0px;width:78px">18</div>
<div class="c" style="left:78px;width:140px">Балка передней оси</div>
<div class="c" style="left:218px;width:140px"></div>
<div class="c r" style="left:358px;width:78px">1,00</div>
<div class="c r" style="left:436px;width:83px">1,00</div>
<div class="c r" style="left:519px;width:78px"></div>
<div class="c r" style="left:597px;width:78px"></div>
<div class="c r green" style="left:675px;width:87px">1,00</div>
<div class="c r blue" style="left:762px;width:78px"></div>
<div class="c r" style="left:840px;width:78px"></div>
<div class="c r" style="left:918px;width:78px"></div>
<div class="c r" style="left:996px;width:78px"></div>
<div class="c r" style="left:1074px;width:78px"></div>
<div class="c r" style="left:1152px;width:105px">3 625,00</div>
<div class="c r" style="left:1257px;width:108px">3 625,00</div>
<div class="c" style="left:1365px;width:140px">ИЧП "Строганов НИ"</div>
<div class="c sk" style="left:1505px;width:140px">Склад Медведково</div>
<div class="c" style="left:1645px;width:90px">18.02.2022</div>
</div>
<div class="row alt" style="top:432px">
<div class="c r n" style="left:0px;width:78px">19</div>
<div class="c" style="left:78px;width:140px">Боковина левая</div>
<div class="c" style="left:218px;width:140px"></div>
<div class="c r" style="left:358px;width:78px">1,00</div>
<div class="c r" style="left:436px;width:83px">1,00</div>
<div class="c r" style="left:519px;width:78px"></div>
<div class="c r" style="left:597px;width:78px"></div>
<div class="c r redbg" style="left:675px;width:87px">1,00</div>
<div class="c r blue" style="left:762px;width:78px">23,00</div>
<div class="c r" style="left:840px;width:78px">23,00</div>
<div class="c r" style="left:918px;width:78px"></div>
<div class="c r" style="left:996px;width:78px"></div>
<div class="c r" style="left:1074px;width:78px"></div>
<div class="c r" style="left:1152px;width:105px">11 292,00</div>
<div class="c r" style="left:1257px;width:108px">11 292,00</div>
<div class="c" style="left:1365px;width:140px">ИЧП "Строганов НИ"</div>
<div class="c sk" style="left:1505px;width:140px">Склад Медведково</div>
<div class="c" style="left:1645px;width:90px">18.02.2022</div>
</div>
<div class="row" style="top:456px">
<div class="c r n" style="left:0px;width:78px">20</div>
<div class="c" style="left:78px;width:140px">Болт М10х1,25х118</div>
<div class="c" style="left:218px;width:140px"></div>
<div class="c r" style="left:358px;width:78px">1,00</div>
<div class="c r" style="left:436px;width:83px">1,00</div>
<div class="c r" style="left:519px;width:78px"></div>
<div class="c r" style="left:597px;width:78px"></div>
<div class="c r redbg" style="left:675px;width:87px">1,00</div>
<div class="c r blue" style="left:762px;width:78px">23,00</div>
<div class="c r" style="left:840px;width:78px">23,00</div>
<div class="c r" style="left:918px;width:78px"></div>
<div class="c r" style="left:996px;width:78px"></div>
<div class="c r" style="left:1074px;width:78px"></div>
<div class="c r" style="left:1152px;width:105px">6 924,00</div>
<div class="c r" style="left:1257px;width:108px">6 924,00</div>
<div class="c" style="left:1365px;width:140px">ИЧП "Строганов НИ"</div>
<div class="c sk" style="left:1505px;width:140px">Склад Медведково</div>
<div class="c" style="left:1645px;width:90px">18.02.2022</div>
</div>
</div>
<div class="frow" style="top:525px;height:26px">
<div class="fc r" style="left:0px;width:78px"></div>
<div class="fc r" style="left:78px;width:140px"></div>
<div class="fc r" style="left:218px;width:140px"></div>
<div class="fc r" style="left:358px;width:78px">47,00</div>
<div class="fc r" style="left:436px;width:83px">39,00</div>
<div class="fc r" style="left:519px;width:78px"></div>
<div class="fc r" style="left:597px;width:78px"></div>
<div class="fc r" style="left:675px;width:87px">39,00</div>
<div class="fc r" style="left:762px;width:78px"></div>
<div class="fc r" style="left:840px;width:78px">644,00</div>
<div class="fc r" style="left:918px;width:78px"></div>
<div class="fc r" style="left:996px;width:78px"></div>
<div class="fc r" style="left:1074px;width:78px"></div>
<div class="fc r" style="left:1152px;width:105px"></div>
<div class="fc r" style="left:1257px;width:108px">319 772,00</div>
<div class="fc r" style="left:1365px;width:140px"></div>
<div class="fc r" style="left:1505px;width:140px"></div>
<div class="fc r last" style="left:1645px;width:90px"></div>
</div>
</div>
<div class="vsb" style="left:1826px;top:522px;height:505px"><div class="th" style="height:221px"></div></div>
<div class="arr up" style="left:1826.5px;top:509px"></div><div class="arr dn" style="left:1826.5px;top:1037px"></div>
<div class="abs" style="left:89px;top:1050px;width:1748px;height:7px;background:#fff"></div>
<div class="abs" style="left:113px;top:1053px;width:1687px;height:8px;border-radius:4px;background:#d0d0d0"></div>
<div class="abs" style="left:113px;top:1053px;width:1457px;height:8px;border-radius:4px;background:#999"></div>
<div class="abs" style="left:98px;top:1053px;width:0;height:0;border-top:3.5px solid transparent;border-bottom:3.5px solid transparent;border-right:4px solid #c4c4c4"></div>
<div class="abs" style="left:1811px;top:1053px;width:0;height:0;border-top:3.5px solid transparent;border-bottom:3.5px solid transparent;border-left:4px solid #333"></div>
<svg class="abs" style="left:0;top:65px" width="1837" height="140" viewBox="0 65 1837 140">
<path d="M90.2 85.4 L96.2 80.2 V83.7 H103.8 V87.1 H96.2 V90.6 Z" fill="#555"/>
<path d="M139.8 85.4 L133.8 80.2 V83.7 H126.2 V87.1 H133.8 V90.6 Z" fill="#a6a6a6"/>
<path d="M174.4 75.2 L177 83 L185.3 83.1 L178.7 88.1 L181.2 96 L174.4 91.2 L167.6 96 L170.1 88.1 L163.5 83.1 L171.8 83 Z" fill="none" stroke="#b8c0c8" stroke-width="1"/>
<g transform="translate(1780.4 84.5) rotate(-45)" fill="none" stroke="#505050" stroke-width="1.1" stroke-linecap="round">
<path d="M-2.2 -3.3 H-4.4 a3.3 3.3 0 0 0 0 6.6 H-2.2"/><path d="M2.2 -3.3 H4.4 a3.3 3.3 0 0 1 0 6.6 H2.2"/><path d="M-3 0 H3"/>
</g>
<circle cx="1810.5" cy="80.2" r="1.5" fill="#666"/><circle cx="1810.5" cy="84.4" r="1.5" fill="#666"/><circle cx="1810.5" cy="88.6" r="1.5" fill="#666"/>
<g id="cal1" fill="#5c5c5c">
<path d="M171.6 182 H180.4 a.8 .8 0 0 1 .8 .8 V191 a.8 .8 0 0 1 -.8 .8 H171.6 a.8 .8 0 0 1 -.8 -.8 V182.8 a.8 .8 0 0 1 .8 -.8 Z M171.9 185.2 V190.8 H180.1 V185.2 Z" fill-rule="evenodd"/>
<rect x="172.6" y="181" width="1.6" height="2" rx=".5"/><rect x="177.8" y="181" width="1.6" height="2" rx=".5"/>
<path d="M171.9 185.2 H180.1 V190.8 H171.9 Z" fill="#e2e2e2"/>
<path d="M172 187 H180 M172 189 H180 M174.6 185.4 V190.8 M177.4 185.4 V190.8" stroke="#b5b5b5" stroke-width=".7"/>
</g>
<use href="#cal1" x="127" y="0"/>
<g stroke="#959595" stroke-width="1.55">
<path d="M192.2 183.3 L197.8 188.9 M197.8 183.3 L192.2 188.9"/>
<path d="M319.2 183.3 L324.8 188.9 M324.8 183.3 L319.2 188.9"/>
<path d="M528.2 183.3 L533.8 188.9 M533.8 183.3 L528.2 188.9"/>
<path d="M649.2 183.3 L654.8 188.9 M654.8 183.3 L649.2 188.9"/>
</g>
</svg>
</body></html>
